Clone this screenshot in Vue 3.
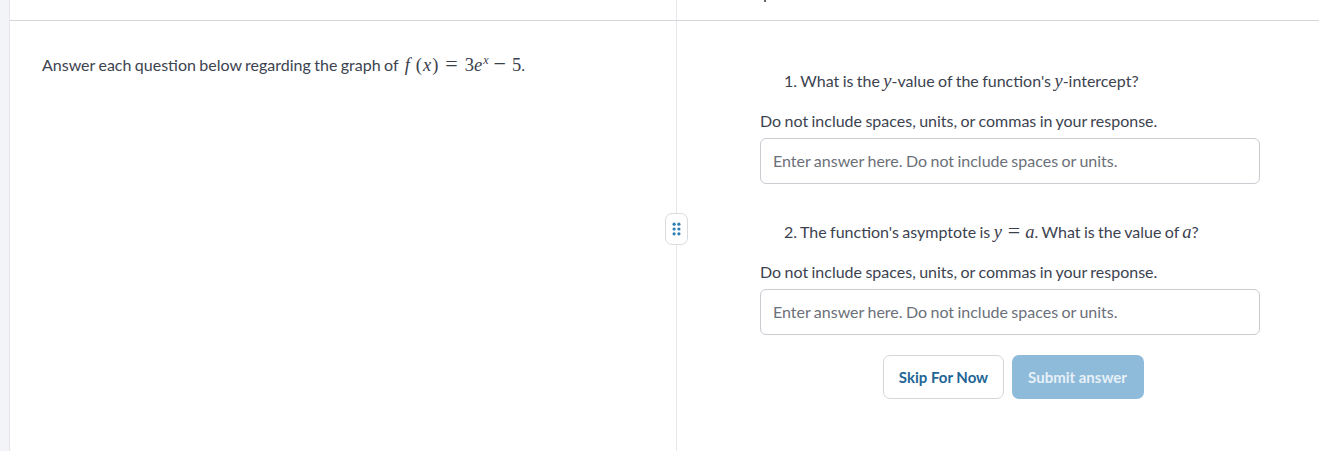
<template>
  <div class="page">
    <div class="side-strip"></div>
    <div class="main">
      <div class="top-bar">
        <div class="top-left"></div>
        <div class="top-right"><span class="tick"></span></div>
      </div>
      <div class="panels">
        <section class="left-panel">
          <p class="intro">
            Answer each question below regarding the graph of
            <span class="math"><i class="m-f">f</i><span class="m-paren">(<i class="m-x">x</i>)</span><span class="m-op m-eq">=</span>3<i>e</i><sup><i>x</i></sup><span class="m-op m-minus">−</span>5</span>.
          </p>
        </section>

        <button class="handle" type="button" aria-label="Resize">
          <svg width="9" height="14" viewBox="0 0 9 14">
            <g fill="#2e7cb2">
              <circle v-for="d in dots" :key="d.x + '-' + d.y" :cx="d.x" :cy="d.y" r="1.6" />
            </g>
          </svg>
        </button>

        <section class="right-panel">
          <div class="question q-one">
            <p class="q-text">
              1. What is the <span class="math"><i>y</i></span>-value of the function's <span class="math"><i>y</i></span>-intercept?
            </p>
            <p class="hint">{{ hint }}</p>
            <input class="answer" type="text" :placeholder="placeholder" />
          </div>
          <div class="question q-two">
            <p class="q-text">
              2. The function's asymptote is <span class="math"><i>y</i><span class="m-op m-eq">=</span><i>a</i></span>. What is the value of <span class="math"><i>a</i></span>?
            </p>
            <p class="hint">{{ hint }}</p>
            <input class="answer" type="text" :placeholder="placeholder" />
          </div>
          <div class="actions">
            <button class="btn btn-skip" type="button">Skip For Now</button>
            <button class="btn btn-submit" type="button">Submit answer</button>
          </div>
        </section>
      </div>
    </div>
  </div>
</template>

<script setup>
const hint = "Do not include spaces, units, or commas in your response.";
const placeholder = "Enter answer here. Do not include spaces or units.";

const dots = [];
for (const y of [2.2, 7, 11.8]) {
  for (const x of [2.1, 6.9]) {
    dots.push({ x, y });
  }
}
</script>

<style>
html,
body {
  margin: 0;
  background: #fff;
}
</style>

<style scoped>
.page {
  display: flex;
  width: 1319px;
  height: 451px;
  overflow: hidden;
  font-family: Lato, "Open Sans", sans-serif;
  font-size: 16px;
  word-spacing: -0.7px;
  color: #3c4350;
  background: #fff;
}

.side-strip {
  width: 9px;
  flex-shrink: 0;
  background: #f2f4f7;
  border-right: 1px solid #e4e6ea;
}

.main {
  flex: 1;
  display: flex;
  flex-direction: column;
  min-width: 0;
}

/* top bar */
.top-bar {
  height: 20px;
  flex-shrink: 0;
  display: flex;
  border-bottom: 1px solid #d5d7da;
}

.top-left {
  width: 667px;
  flex-shrink: 0;
  box-sizing: border-box;
  border-right: 1px solid #e6e7ea;
}

.top-right {
  position: relative;
  flex: 1;
}

.tick {
  position: absolute;
  left: 87px;
  top: 0;
  width: 2px;
  height: 2px;
  background: #666;
}

/* panels */
.panels {
  position: relative;
  flex: 1;
  display: flex;
}

.left-panel {
  width: 667px;
  flex-shrink: 0;
  box-sizing: border-box;
  padding: 32px 32px 0;
  border-right: 1px solid #e6e7ea;
}

.intro {
  margin: 0;
  line-height: 24px;
  white-space: nowrap;
}

.math {
  font-family: "Liberation Serif", "DejaVu Serif", serif;
  font-size: 18.5px;
  color: #3a404b;
}

.m-f {
  margin-left: 3px;
}

.m-paren {
  margin-left: 6px;
}

.m-x {
  margin: 0 1px;
}

.m-op {
  display: inline-block;
  line-height: 1;
  font-size: 22px;
}

.m-eq {
  margin: 0 5px 0 6px;
}

.left-panel .m-eq {
  margin: 0 7px 0 7px;
}

.m-minus {
  margin: 0 6px 0 5px;
}

.math sup {
  margin-left: 1px;
  font-size: 12px;
  line-height: 0;
  vertical-align: 7px;
}

.handle {
  position: absolute;
  left: 655px;
  top: 192px;
  width: 23px;
  height: 32px;
  padding: 0;
  display: flex;
  align-items: center;
  justify-content: center;
  background: #fff;
  border: 1px solid #d9dbde;
  border-radius: 7px;
}

.right-panel {
  flex: 1;
  box-sizing: border-box;
  padding: 0 59px 0 83px;
}

.question {
  display: flex;
  flex-direction: column;
}

.q-one {
  padding-top: 48px;
}

.q-two {
  padding-top: 36px;
}

.q-text {
  margin: 0;
  padding-left: 24px;
  line-height: 24px;
  white-space: nowrap;
}

.hint {
  margin: 16px 0 0;
  line-height: 24px;
  white-space: nowrap;
}

.answer {
  box-sizing: border-box;
  width: 500px;
  height: 46px;
  margin-top: 5px;
  padding: 0 12px 2px;
  font-family: inherit;
  font-size: 16px;
  word-spacing: inherit;
  color: #3c4350;
  background: #fff;
  border: 1px solid #c9ccd1;
  border-radius: 6px;
  outline: none;
}

.answer::placeholder {
  color: #6b7079;
  opacity: 1;
}

.actions {
  display: flex;
  justify-content: center;
  gap: 8px;
  width: 500px;
  margin-top: 20px;
  padding-left: 6px;
  box-sizing: border-box;
}

.btn {
  box-sizing: border-box;
  height: 44px;
  padding: 0;
  font-family: inherit;
  font-size: 15px;
  font-weight: 700;
  white-space: nowrap;
  border-radius: 7px;
  cursor: pointer;
}

.btn-skip {
  width: 121px;
  padding-left: 1px;
  color: #1f6695;
  background: #fff;
  border: 1px solid #d5d7da;
}

.btn-submit {
  width: 132px;
  color: #e6f0f7;
  background: #8fbbdb;
  border: none;
}
</style>
